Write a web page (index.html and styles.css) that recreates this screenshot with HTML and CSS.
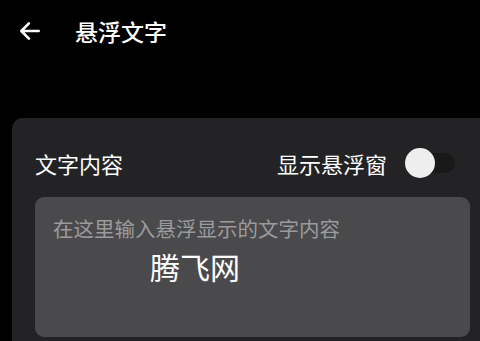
FILE: index.html
```html
<!DOCTYPE html>
<html>
<head>
    <title>悬浮文字</title>
    <meta name="viewport" content="width=device-width, initial-scale=1.0">
    <link rel="stylesheet" href="styles.css">
</head>
<body>
    <div class="header">
        <svg class="back" width="24" height="24" viewBox="0 0 24 24">
            <path d="M20 12H5M11 5l-7 7 7 7" fill="none" stroke="#fff" stroke-width="2.4" stroke-linecap="round" stroke-linejoin="round"/>
        </svg>
        <div class="title">悬浮文字</div>
    </div>
    <div class="card">
        <div class="row">
            <div class="label">文字内容</div>
            <div class="switch-box">
                <span class="label">显示悬浮窗</span>
                <div class="switch"><div class="thumb"></div></div>
            </div>
        </div>
        <div class="input-box">
            <div class="placeholder">在这里输入悬浮显示的文字内容</div>
        </div>
    </div>
    <div class="float-text">腾飞网</div>
</body>
</html>
```

FILE: styles.css
```css
html, body {
    margin: 0;
    height: 100%;
    background-color: #000;
    color: #fff;
    font-family: "Noto Sans CJK SC", "Noto Sans", sans-serif;
    overflow: hidden;
}
body {
    position: relative;
}
.header {
    display: flex;
    align-items: center;
    height: 62px;
    padding-left: 17px;
}
.back {
    width: 26px;
    height: 26px;
}
.title {
    margin-left: 32px;
    font-size: 23px;
    font-weight: 500;
    line-height: 30px;
}
.card {
    margin: 56px 0 0 12px;
    height: 223px;
    box-sizing: border-box;
    background-color: #232325;
    border-radius: 11px 0 0 0;
    padding: 28px 0 0 23px;
}
.row {
    display: flex;
    justify-content: space-between;
    align-items: center;
    width: 420px;
    height: 34px;
}
.label {
    font-size: 22px;
    line-height: 30px;
}
.switch-box {
    display: flex;
    align-items: center;
}
.switch {
    position: relative;
    width: 50px;
    height: 20px;
    margin-left: 18px;
    border-radius: 10px;
    background-color: #19191a;
}
.thumb {
    position: absolute;
    left: 0;
    top: -5px;
    width: 30px;
    height: 30px;
    border-radius: 50%;
    background-color: #eeeeee;
}
.input-box {
    margin-top: 17px;
    width: 435px;
    height: 140px;
    background-color: #4a4a4c;
    border-radius: 9px;
    padding: 17px 0 0 18px;
    box-sizing: border-box;
}
.placeholder {
    font-size: 20.5px;
    line-height: 28px;
    color: #9b9b9d;
}
.float-text {
    position: absolute;
    left: 150px;
    top: 245px;
    font-size: 30px;
    line-height: 42px;
}
```
